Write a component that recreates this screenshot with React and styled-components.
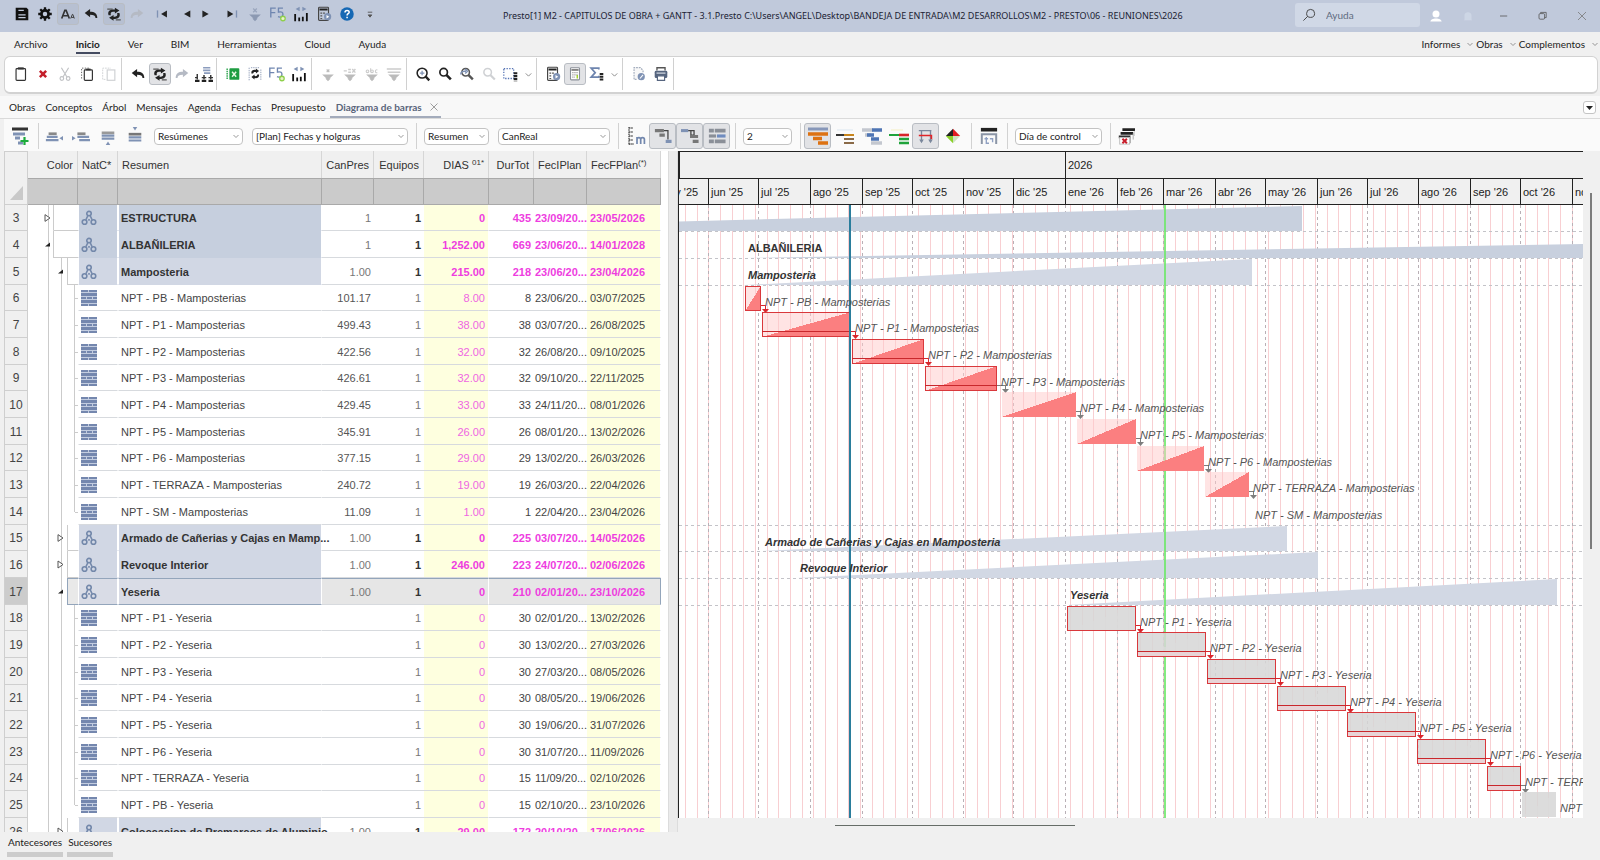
import React from "react";
import styled, { createGlobalStyle, css } from "styled-components";

const UI = `Lato, "Noto Sans", sans-serif`;
const GRID = `"Liberation Sans", Arial, sans-serif`;

const Global = createGlobalStyle`
  * { box-sizing: border-box; }
  html, body { margin: 0; height: 100%; }
  #root { height: 100%; }
  body { font-family: ${UI}; font-size: 10px; color: #222; background: #f0f0f0; overflow: hidden; }
  button, input, select { font: inherit; color: inherit; margin: 0; }
`;

/* ---------- icons ---------- */

const K = "#222";
const B = "#7f92b4";
const F = "#cfd1d4";
const FUNNEL = "M3.500 10.500h13l-4.800 4.500h1.300l-3 3-3-3h1.300z";

const ICONS = {
  save: <><path d="M3 3h12l2 2v12H3z" fill="#111" /><path d="M6 6h6M6 11h8M6 14h8" stroke="#c0c9db" strokeWidth="1.4" /></>,
  gear: <><circle cx="10" cy="10" r="4" fill="none" stroke="#111" strokeWidth="3" /><path d="M10 2.500v3M10 14.500v3M2.500 10h3M14.500 10h3M4.700 4.700l2 2M13.300 13.300l2 2M15.300 4.700l-2 2M6.700 13.300l-2 2" stroke="#111" strokeWidth="2.600" /></>,
  fontSize: <><path d="M3 15L6.500 6h1.400L11.500 15M4.500 12h5.400" fill="none" stroke="#333" strokeWidth="1.800" /><path d="M13 15l1.800-4.500h.6L17 15M13.700 13.800h2.800" fill="none" stroke="#333" strokeWidth="1" /></>,
  undo: <path d="M3 9l6-4.500v3c5 0 8 2 8 7h-2c0-3-2-3.800-6-3.800v3z" fill={K} />,
  redoOff: <path d="M17 9l-6-4.500v3c-5 0-8 2-8 7h2c0-3 2-3.800 6-3.800v3z" fill="#b5bac4" />,
  cycle: <><path d="M4 11.500c-1.500-4 1-6.500 5-6.500h2V3l5 3.200-5 3.300V7.500H9c-2.500 0-3 1.500-2.500 4z" fill={K} /><path d="M16 9c1.500 4-1 6.500-5 6.500H9.500v2l-5-3.200 5-3.300v2H11c2.500 0 3-1.500 2.500-4z" fill={K} /><path d="M2.500 4.500h6M12 16.500h5.500" stroke="#555" strokeWidth="1.500" /></>,
  first: <><path d="M5 6v8" stroke={B} strokeWidth="1.500" /><path d="M15.500 6v8L9 10z" fill={K} /></>,
  prev: <path d="M17 6v8l-7-4z" fill={K} />,
  next: <path d="M6 6v8l7-4z" fill={K} />,
  last: <><path d="M15 6v8" stroke={B} strokeWidth="1.500" /><path d="M5 6v8l6.500-4z" fill={K} /></>,
  filterBlue: <><path d={FUNNEL} fill="#8c99b2" /><path d="M8 4l4 4M12 4L8 8" stroke="#9aa6bd" strokeWidth="1.500" /></>,
  f5: <><path d="M2 14V3.500h5.500M2 8.500h5M15.500 3.500h-5v4.500c4-1 5 .5 5 2.500 0 2.500-3 3.500-5.500 2.500" fill="none" stroke="#6f86b0" strokeWidth="1.500" /><circle cx="15.500" cy="15" r="2.500" fill="#e9f3c8" stroke="#8ed04b" strokeWidth="1.400" /></>,
  bars: <><path d="M8.500 2v5L4 4.500zM11.500 2v5L16 4.500z" fill={B} /><path d="M3.500 18v-8M8 18v-4M12 18v-5M16.500 18V9" stroke="#111" strokeWidth="2" /></>,
  calcPlay: <><rect x="4" y="2.500" width="11" height="14.500" rx="1" fill="none" stroke="#444" strokeWidth="1.300" /><path d="M5 5h9" stroke={K} strokeWidth="2.200" /><path d="M6 9h2M9 9h2M6 12h2M6 15h2" stroke="#555" strokeWidth="1.300" /><circle cx="14" cy="13" r="4" fill={B} /><path d="M12.800 11v4l3-2z" fill="#fff" /></>,
  help: <><circle cx="10" cy="10" r="7.500" fill="#1668b4" /><path d="M7.800 8.300c0-3 4.600-2.800 4.600-.3 0 1.700-2.300 1.700-2.300 3.600M10.100 13v1.800" fill="none" stroke="#fff" strokeWidth="1.700" /></>,
  more: <path d="M7.500 8h5M8 11h4l-2 2.500z" stroke="#555" fill="#555" strokeWidth="1" />,
  clip: <><rect x="4.500" y="4" width="10.500" height="13" rx="1" fill="none" stroke="#333" strokeWidth="1.300" /><path d="M6.500 3.800h6.500" stroke="#333" strokeWidth="2.400" /></>,
  del: <path d="M6.500 6.500l7 7M13.500 6.500l-7 7" stroke="#c4202c" strokeWidth="2.800" />,
  cut: <g fill="none" stroke="#c0c2c5" strokeWidth="1.300"><path d="M6 3l6 10M14 3L8 13" /><circle cx="6.500" cy="15" r="2" /><circle cx="13.500" cy="15" r="2" /></g>,
  copy: <><rect x="7" y="5.500" width="9" height="11.500" rx="1" fill="none" stroke="#333" strokeWidth="1.300" /><path d="M9 5h5" stroke="#333" strokeWidth="2" /><path d="M4 15V3.500h8" fill="none" stroke="#555" strokeDasharray="1.500 1.500" /></>,
  pasteOff: <><rect x="8" y="5.500" width="8.500" height="11.500" fill="none" stroke={F} strokeWidth="1.300" /><path d="M6 16H3V3.500h9" fill="none" stroke={F} strokeDasharray="2 1" /></>,
  org: <><path d="M9 3h8M9 6h8M10 9h7" stroke="#8b9cbd" strokeWidth="1.800" /><path d="M0 17.500h5M7.500 17.500h5M15 17.500h5" stroke={K} strokeWidth="2.500" /><path d="M2.500 10v6M10 11v5M17.500 11v5M7.500 14h5M15 14h5M0 14h2" stroke="#333" strokeWidth="1.600" /></>,
  excel: <><rect x="6" y="3.500" width="11" height="13" rx="1" fill="#1f9d42" /><path d="M3.500 4v12" stroke="#1f9d42" strokeWidth="1.500" strokeDasharray="1.500 1" /><path d="M9 7.500l4.500 5.500M13.500 7.500L9 13" stroke="#e9f8e4" strokeWidth="1.600" /></>,
  refresh: <><path d="M3.500 3v14M5.500 3h9M16.500 5v12" stroke="#8c9bb5" strokeDasharray="1.500 1" fill="none" /><path d="M6 9.500C5.500 6 8 5 11 5.500V4l3.500 2.700L11 9.500V7.800C9 7.500 8 8 8 9.500zM14.500 10.500c.5 3.500-2 4.500-5 4v1.500L6 13.300 9.500 10.500v1.800c2 .3 3-.3 3-1.800z" fill={K} /></>,
  f1: <><path d={FUNNEL} fill="#bbb" /><path d="M8.500 5l3 3M11.500 5l-3 3" stroke="#bbb" strokeWidth="1.300" /></>,
  f2: <><path d={FUNNEL} fill="#bbb" /><path d="M3 6.500h3.500M8 5h3M8 8h3M12.500 4.500L16 8.500M16 4.500l-3.500 4" stroke="#ccc" strokeWidth="1.600" /></>,
  f3: <><path d={FUNNEL} fill="#bbb" /><g fill="none" stroke="#ccc" strokeWidth="1.200"><circle cx="5" cy="7" r="1.500" /><circle cx="10" cy="7" r="1.500" /><path d="M8.500 3.500v4M16 5.500c-3-1-3 4 0 3" /></g></>,
  f4: <><path d={FUNNEL} fill="#bbb" /><path d="M2 4.500h16M3 8h14" stroke="#ccc" strokeWidth="1.800" /></>,
  zoomIn: <g fill="none" stroke={K}><circle cx="9" cy="9" r="5.500" strokeWidth="1.700" /><path d="M13 13l4 4" strokeWidth="2.600" /><path d="M9 6.500v5M6.500 9h5" stroke={B} strokeWidth="1.400" /></g>,
  zoom: <g fill="none" stroke={K}><circle cx="8.500" cy="8" r="4.200" strokeWidth="1.900" /><path d="M11.500 11l5 5" strokeWidth="2.800" /></g>,
  zoomPrev: <g fill="none" stroke="#555"><circle cx="8.500" cy="8" r="4.200" strokeWidth="1.700" /><path d="M11.500 11l5 5" strokeWidth="2.600" /><path d="M3 10.500c0-3 3-4 6-3.500M8 4.500L10.500 7 8 9.500" stroke={B} strokeWidth="1.600" /></g>,
  zoomOff: <g fill="none" stroke={F}><circle cx="8.500" cy="8" r="4.200" strokeWidth="1.700" /><path d="M11.500 11l5 5" strokeWidth="2.400" /></g>,
  select: <><rect x="2" y="4" width="11" height="11" fill="none" stroke="#5674b5" strokeWidth="1.400" strokeDasharray="1.500 1.500" /><path d="M15 8v10" stroke={K} strokeWidth="4" strokeDasharray="2.400 .8" /></>,
  calc: <><rect x="5" y="3" width="10" height="13.500" rx="1" fill="#fff" stroke="#8a8f98" strokeWidth="1.200" /><path d="M6 5.500h8" stroke="#555" strokeWidth="1.500" /><path d="M7 8.500h6M7 11h6M7 13.500h3" stroke="#999" strokeWidth="1.400" strokeDasharray="1.300 1" /><path d="M12.500 11v4" stroke="#9bd11c" strokeWidth="1.500" /></>,
  sigma: <><path d="M12 5V3.500H3.500l4.500 5-4.500 5H12V12" fill="none" stroke="#6d84ae" strokeWidth="1.900" /><path d="M15 9v8.500" stroke={K} strokeWidth="4" strokeDasharray="2.200 .8" /></>,
  docLink: <><path d="M14.500 8V6l-3-3H4.500v13H8" fill="#f8f8f8" stroke="#a3adbd" strokeWidth="1.300" strokeDasharray="2 1" /><circle cx="12.500" cy="13" r="4" fill={B} /><path d="M11 15l3.500-4" stroke="#fff" strokeWidth="1.200" /></>,
  print: <><path d="M5.500 6V3h9v3" fill="none" stroke="#555" strokeWidth="1.500" /><rect x="3" y="6.500" width="14" height="8" rx="1.500" fill="#56657f" /><path d="M5 9h10" stroke="#d9dfe9" strokeWidth="1.300" /><path d="M6 12h8v5H6z" fill="#fff" stroke="#56657f" strokeWidth="1.300" /></>,
  addRow: <><path d="M2 3h16" stroke="#333" strokeWidth="3" /><path d="M3 8h12M5 12h5M8 17h5" stroke={B} strokeWidth="2.800" /><path d="M14.500 11v8M10.500 15h8" stroke="#1cab3c" strokeWidth="2.200" /></>,
  rowL: <><path d="M4 7.500h9" stroke="#888" strokeWidth="3" /><path d="M2 11h12M1 14.500h14" stroke={B} strokeWidth="2.500" /><path d="M20 10v5l-4-2.500z" fill={B} /></>,
  rowR: <><path d="M6 7.500h9" stroke="#888" strokeWidth="3" /><path d="M6 11h13M8 14.500h12" stroke={B} strokeWidth="2.500" /><path d="M0 10v5l4-2.500z" fill={B} /></>,
  rowD: <><path d="M3 6.500h14" stroke="#999" strokeWidth="3" /><path d="M3 9.500h14M3 13h14" stroke={B} strokeWidth="2.400" /><path d="M7.500 20h5L10 16z" fill={B} /></>,
  rowU: <><path d="M7.500 0h5L10 4z" fill={B} /><path d="M3 8h14" stroke="#777" strokeWidth="3" /><path d="M3 11.500h14M3 15h14" stroke={B} strokeWidth="2.400" /></>,
  scaleM: <><path d="M3 1v18M3 18h5M3 2h4M3 6h4M3 10h4M3 14h4" stroke="#555" strokeWidth="1.400" fill="none" strokeDasharray="1.500 .7" /><path d="M11 18v-7M11 13.500c0-2.500 3.700-2.500 3.700 0V18M14.700 13.500c0-2.500 3.700-2.500 3.700 0V18" fill="none" stroke="#7388ae" strokeWidth="1.700" /></>,
  link1: <><path d="M1 4h10M6 9h6" stroke="#777" strokeWidth="3.400" /><path d="M11 4h4.500v10" fill="none" stroke="#444" strokeWidth="1.400" /><path d="M13 16h6.500" stroke={B} strokeWidth="3.600" /></>,
  link2: <><path d="M0 4h8" stroke={B} strokeWidth="3.400" /><path d="M8 4h6.500v6M11 4v5h3" fill="none" stroke="#444" strokeWidth="1.400" /><path d="M10 10.500h9M13 16h6.500" stroke="#777" strokeWidth="3.400" /></>,
  grid3: <><path d="M1 4h5.500M7.500 4h12M1 16h5.500M7.500 16h12" stroke="#8a8f98" strokeWidth="4" /><path d="M1 10h8" stroke="#8a8f98" strokeWidth="3.500" /><path d="M10 10h9.500" stroke="#6f8cc0" strokeWidth="3.500" /></>,
  orange: <><path d="M0 3h20" stroke="#8797b9" strokeWidth="3" /><path d="M0 8h20M5 12.500h9M10 17h10" stroke="#dd7212" strokeWidth="3.400" /></>,
  brown: <><path d="M2 4h16" stroke="#dbe6f0" /><path d="M1 9h8" stroke="#333" strokeWidth="2" /><path d="M9 9h10" stroke="#c8851c" strokeWidth="2" /><path d="M9 13h10M9 17h10" stroke="#8a6a48" strokeWidth="2.200" /></>,
  blueBars: <><path d="M0 4h11M3 9h6M9 17h11" stroke="#c3c7cf" strokeWidth="3.500" /><path d="M10 4h10M5 9h7M9 13h8" stroke="#4f75b4" strokeWidth="3.500" /></>,
  greenBars: <><path d="M2 4h12" stroke="#f4efc0" /><path d="M0 9h11" stroke="#1fa33b" strokeWidth="2" /><path d="M10 9h10" stroke="#d8232a" strokeWidth="2.600" /><path d="M10 13h10M10 17h10" stroke="#1fa33b" strokeWidth="2.400" /></>,
  flow: <><path d="M5 4v12M15 4v12M2 4h14" stroke="#7a879c" strokeWidth="1.500" fill="none" /><path d="M2 9.500h14v4" fill="none" stroke="#e02428" strokeWidth="1.800" /><path d="M2.500 14h5L5 18zM12.500 14h5L15 18z" fill="#7a879c" /></>,
  diamond: <><path d="M10 2v8H2z" fill="#222" /><path d="M10 2l8 8h-8z" fill="#e11b22" /><path d="M2 10h8v8z" fill="#8bd02b" /><path d="M18 10l-8 8v-8z" fill="#cfe3c2" /></>,
  window: <><rect x="1" y="1" width="18" height="4" fill="#222" /><path d="M2 7v12M2 8h16v11" fill="none" stroke="#8b95a6" strokeWidth="2.200" /><path d="M5 13h4M7 11v7h3M11 13h3v4" fill="none" stroke="#8fa0c2" strokeWidth="1.500" /></>,
  closeAll: <><path d="M6 1.500h14v3H6zM4 5.500h14v3H4zM2 9.500h13v3H2z" fill="#222" /><path d="M15 10v8M18 7v7M20 4v6" fill="none" stroke="#aaa" /><rect x="3" y="11.500" width="11" height="7.500" fill="#fff" stroke="#bbb" /><path d="M6 13l5 5M11 13l-5 5" stroke="#c81e2b" strokeWidth="2.200" /></>,
  user: <><circle cx="10" cy="7" r="5" fill="#fff" /><path d="M2 18c0-6 16-6 16 0z" fill="#fff" /></>,
  bell: <path d="M5 15V9c0-6 10-6 10 0v6l1 1H4z" fill="#cdd6e5" />,
  min: <path d="M5 10h9" stroke="#555" />,
  max: <><rect x="5" y="7" width="7" height="7" rx="1.500" fill="none" stroke="#555" /><path d="M7 7V5.500h7V12h-2" fill="none" stroke="#555" /></>,
  close: <path d="M5 5l10 10M15 5L5 15" stroke="#777" />,
  search: <g fill="none" stroke="#444" strokeWidth="1.200"><circle cx="12" cy="8" r="5" /><path d="M8.500 11.500L3 17" /></g>,
  chev: <path d="M5 8l5 5 5-5" fill="none" stroke="#777" strokeWidth="1.500" />,
};

const Svg = styled.svg`
  width: ${(p) => p.$s || 18}px;
  height: ${(p) => p.$s || 18}px;
  flex: none;
  display: block;
`;
const Icon = ({ name, size }) => (
  <Svg viewBox="0 0 20 20" $s={size} aria-hidden="true">{ICONS[name]}</Svg>
);

/* ---------- shared controls ---------- */

const IconButton = styled.button`
  width: ${(p) => p.$w || 22}px;
  height: ${(p) => p.$h || 22}px;
  padding: 0;
  flex: none;
  display: flex;
  align-items: center;
  justify-content: center;
  border: 1px solid ${(p) => (p.$on ? "#b9bdc3" : "transparent")};
  border-radius: 3px;
  background: ${(p) => (p.$on ? p.$fill || "#e2e3e6" : "transparent")};
`;

const Tool = ({ name, on, w, h, fill, size }) => (
  <IconButton type="button" aria-label={name} $on={on} $w={w} $h={h} $fill={fill}>
    <Icon name={name} size={size} />
  </IconButton>
);

const Shell = styled.div`
  height: 100vh;
  display: flex;
  flex-direction: column;
`;

const TitleBar = styled.header`
  height: 32px;
  flex: none;
  display: flex;
  align-items: center;
  background: #c0c9db;
  padding: 0 7px 5px 11px;
`;
const QuickGroup = styled.div`
  display: flex;
  gap: ${(p) => p.$gap || 0}px;
  margin-right: ${(p) => p.$mr || 0}px;
`;
const Title = styled.h1`
  flex: 1;
  margin: 0 0 0 122px;
  padding-top: 4px;
  font-family: "Noto Sans", "Open Sans", sans-serif;
  font-size: 9px;
  font-weight: 400;
  line-height: 14px;
  color: #1b2233;
  white-space: nowrap;
`;
const SearchBox = styled.label`
  width: 125px;
  height: 24px;
  margin: 3px 5px 0 0;
  padding-left: 6px;
  display: flex;
  align-items: center;
  gap: 9px;
  border-radius: 3px;
  background: #d0d8e6;
  input {
    width: 80px;
    border: 0;
    padding: 0;
    background: none;
    outline: none;
  }
  input::placeholder { color: #5f6b7f; }
`;
const WindowButtons = styled.div`
  display: flex;
  gap: ${(p) => p.$gap}px;
  padding: 4px ${(p) => p.$pad || 0}px 0 0;
`;

const MenuBar = styled.nav`
  height: 24px;
  flex: none;
  display: flex;
  justify-content: space-between;
  padding: 4px 0 0 14px;
  background: #f0f0f0;
`;
const MenuGroup = styled.div`
  display: flex;
  gap: ${(p) => p.$gap}px;
`;
const MenuItem = styled.button`
  height: 18px;
  padding: 0;
  display: flex;
  align-items: center;
  gap: 5px;
  border: 0;
  border-bottom: 2px solid ${(p) => (p.$active ? "#444b60" : "transparent")};
  background: none;
  font-weight: ${(p) => (p.$active ? 700 : 400)};
  white-space: nowrap;
`;

const Ribbon = styled.div`
  height: 38px;
  flex: none;
  margin: 0 2px 0 4px;
  display: flex;
  background: #fff;
  border: 1px solid #d2d2d2;
  border-bottom-width: 2px;
  border-radius: 6px;
`;
const RibbonGroup = styled.div`
  display: flex;
  align-items: center;
  margin: 1px 0 2px;
  padding: 0 1px 0 5px;
  border-right: 1px solid #d0d0d0;
`;

const TabBar = styled.nav`
  height: 23px;
  flex: none;
  margin-top: 2px;
  padding: 0 4px 0 9px;
  display: flex;
  align-items: stretch;
  gap: 10px;
  background: #f8f8f8;
  border-bottom: 1px solid #dadada;
`;
const Tab = styled.a`
  display: flex;
  align-items: center;
  padding: 2px 0;
  color: #222;
  text-decoration: none;
  white-space: nowrap;
  ${(p) => p.$active && css`
    gap: 5px;
    margin-left: -6px;
    padding: 2px 0 0 6px;
    color: #59647a;
    font-weight: 700;
    border-bottom: 2px solid #a3abbb;
  `}
`;
const TabMenu = styled.button`
  width: 13px;
  height: 13px;
  margin: 5px 0 0 auto;
  padding: 0;
  display: flex;
  align-items: center;
  justify-content: center;
  border: 1px solid #c4c4c4;
  border-radius: 3px;
  background: #fff;
`;

const ChartBar = styled.div`
  height: 32px;
  flex: none;
  padding: 4px 0 2px 2px;
  margin-left: 4px;
  display: flex;
  align-items: center;
  background: #fafafa;
`;
const ChartTools = styled.div`
  height: 26px;
  display: flex;
  align-items: center;
  padding: 0 ${(p) => (p.$open ? 0 : 5)}px 0 ${(p) => (p.$first ? 0 : p.$open ? 1 : 3)}px;
  border-right: ${(p) => (p.$open ? 0 : 1)}px solid #d2d2d2;
`;
const Fields = styled.div`
  height: 26px;
  display: flex;
  align-items: center;
  gap: 9px;
  padding: 0 8px 0 ${(p) => (p.$tight ? 6 : 7)}px;
  border-right: 1px solid #d2d2d2;
`;
const SelectWrap = styled.span`
  display: grid;
  align-items: center;
  width: ${(p) => p.$w}px;
  > * { grid-area: 1 / 1; }
  svg { justify-self: end; margin-right: 2px; pointer-events: none; }
`;
const SelectBox = styled.select`
  appearance: none;
  width: 100%;
  height: 17px;
  padding: 0 14px 0 3px;
  border: 1px solid #c3c3c3;
  border-radius: 4px;
  background: #fff;
`;
const Select = ({ label, value, width }) => (
  <SelectWrap $w={width}>
    <SelectBox aria-label={label} defaultValue={value}><option>{value}</option></SelectBox>
    <Icon name="chev" size={10} />
  </SelectWrap>
);

/* ---------- data ---------- */

const ROWS = [
  { n: 3, level: 0, name: "ESTRUCTURA", can: "1", dias: "0", dur: 435, ini: "23/09/20...", fin: "23/05/2026", from: [2024, 9, 23], to: [2026, 5, 23] },
  { n: 4, level: 0, open: true, name: "ALBAÑILERIA", can: "1", dias: "1,252.00", dur: 669, ini: "23/06/20...", fin: "14/01/2028", from: [2025, 6, 23], to: [2028, 1, 14] },
  { n: 5, level: 1, open: true, name: "Mamposteria", can: "1.00", dias: "215.00", dur: 218, ini: "23/06/20...", fin: "23/04/2026", from: [2025, 6, 23], to: [2026, 4, 23] },
  { n: 6, level: 2, name: "NPT - PB - Mamposterias", can: "101.17", dias: "8.00", dur: 8, ini: "23/06/20...", fin: "03/07/2025", from: [2025, 6, 23], to: [2025, 7, 3], kind: "red", frame: true, link: "red" },
  { n: 7, level: 2, name: "NPT - P1 - Mamposterias", can: "499.43", dias: "38.00", dur: 38, ini: "03/07/20...", fin: "26/08/2025", from: [2025, 7, 3], to: [2025, 8, 26], kind: "red", frame: true, through: true, link: "red" },
  { n: 8, level: 2, name: "NPT - P2 - Mamposterias", can: "422.56", dias: "32.00", dur: 32, ini: "26/08/20...", fin: "09/10/2025", from: [2025, 8, 26], to: [2025, 10, 9], kind: "red", frame: true, through: true, link: "red" },
  { n: 9, level: 2, name: "NPT - P3 - Mamposterias", can: "426.61", dias: "32.00", dur: 32, ini: "09/10/20...", fin: "22/11/2025", from: [2025, 10, 9], to: [2025, 11, 22], kind: "red", frame: true, through: true, link: "gray" },
  { n: 10, level: 2, name: "NPT - P4 - Mamposterias", can: "429.45", dias: "33.00", dur: 33, ini: "24/11/20...", fin: "08/01/2026", from: [2025, 11, 24], to: [2026, 1, 8], kind: "red", link: "gray" },
  { n: 11, level: 2, name: "NPT - P5 - Mamposterias", can: "345.91", dias: "26.00", dur: 26, ini: "08/01/20...", fin: "13/02/2026", from: [2026, 1, 8], to: [2026, 2, 13], kind: "red", link: "gray" },
  { n: 12, level: 2, name: "NPT - P6 - Mamposterias", can: "377.15", dias: "29.00", dur: 29, ini: "13/02/20...", fin: "26/03/2026", from: [2026, 2, 13], to: [2026, 3, 26], kind: "red", link: "gray" },
  { n: 13, level: 2, name: "NPT - TERRAZA - Mamposterias", can: "240.72", dias: "19.00", dur: 19, ini: "26/03/20...", fin: "22/04/2026", from: [2026, 3, 26], to: [2026, 4, 22], kind: "red", link: "gray" },
  { n: 14, level: 2, last: true, name: "NPT - SM - Mamposterias", can: "11.09", dias: "1.00", dur: 1, ini: "22/04/20...", fin: "23/04/2026", from: [2026, 4, 22], to: [2026, 4, 23] },
  { n: 15, level: 1, name: "Armado de Cañerias y Cajas en Mamp...", label: "Armado de Cañerias y Cajas en Mamposteria", can: "1.00", dias: "0", dur: 225, ini: "03/07/20...", fin: "14/05/2026", from: [2025, 7, 3], to: [2026, 5, 14] },
  { n: 16, level: 1, name: "Revoque Interior", can: "1.00", dias: "246.00", dur: 223, ini: "24/07/20...", fin: "02/06/2026", from: [2025, 7, 24], to: [2026, 6, 2] },
  { n: 17, level: 1, open: true, selected: true, name: "Yeseria", can: "1.00", dias: "0", dur: 210, ini: "02/01/20...", fin: "23/10/2026", from: [2026, 1, 2], to: [2026, 10, 23] },
  { n: 18, level: 2, name: "NPT - P1 - Yeseria", can: "", dias: "0", dur: 30, ini: "02/01/20...", fin: "13/02/2026", from: [2026, 1, 2], to: [2026, 2, 13], kind: "idle", frame: true, link: "red" },
  { n: 19, level: 2, name: "NPT - P2 - Yeseria", can: "", dias: "0", dur: 30, ini: "13/02/20...", fin: "27/03/2026", from: [2026, 2, 13], to: [2026, 3, 27], kind: "idle", frame: true, through: true, link: "red" },
  { n: 20, level: 2, name: "NPT - P3 - Yeseria", can: "", dias: "0", dur: 30, ini: "27/03/20...", fin: "08/05/2026", from: [2026, 3, 27], to: [2026, 5, 8], kind: "idle", frame: true, through: true, link: "red" },
  { n: 21, level: 2, name: "NPT - P4 - Yeseria", can: "", dias: "0", dur: 30, ini: "08/05/20...", fin: "19/06/2026", from: [2026, 5, 8], to: [2026, 6, 19], kind: "idle", frame: true, through: true, link: "red" },
  { n: 22, level: 2, name: "NPT - P5 - Yeseria", can: "", dias: "0", dur: 30, ini: "19/06/20...", fin: "31/07/2026", from: [2026, 6, 19], to: [2026, 7, 31], kind: "idle", frame: true, through: true, link: "red" },
  { n: 23, level: 2, name: "NPT - P6 - Yeseria", can: "", dias: "0", dur: 30, ini: "31/07/20...", fin: "11/09/2026", from: [2026, 7, 31], to: [2026, 9, 11], kind: "idle", frame: true, through: true, link: "red" },
  { n: 24, level: 2, name: "NPT - TERRAZA - Yeseria", can: "", dias: "0", dur: 15, ini: "11/09/20...", fin: "02/10/2026", from: [2026, 9, 11], to: [2026, 10, 2], kind: "idle", frame: true, through: true, link: "gray" },
  { n: 25, level: 2, last: true, name: "NPT - PB - Yeseria", can: "", dias: "0", dur: 15, ini: "02/10/20...", fin: "23/10/2026", from: [2026, 10, 2], to: [2026, 10, 23], kind: "idle" },
  { n: 26, level: 1, name: "Coloccacion de Premarcos de Aluminio", can: "1.00", dias: "29.00", dur: 172, ini: "20/10/20...", fin: "17/06/2026", off: true },
];

/* ---------- table ---------- */

const Work = styled.main`
  flex: 1;
  min-height: 0;
  display: flex;
  font-family: ${GRID};
  font-size: 11px;
`;
const TablePane = styled.section`
  width: 664px;
  flex: none;
  margin-left: 4px;
  overflow: hidden;
  background: #fff;
`;
const Splitter = styled.div`
  width: 10px;
  flex: none;
  background: #ebebeb;
  border: solid #dcdcdc;
  border-width: 0 1px;
`;
const Table = styled.table`
  table-layout: fixed;
  width: 657px;
  border-collapse: separate;
  border-spacing: 0;
  line-height: 16px;
  white-space: nowrap;
`;
const Col = styled.col`
  width: ${(p) => p.$w}px;
`;
const Head = styled.th`
  height: 27px;
  padding: 0 ${(p) => (p.$end ? 4 : 0)}px 0 4px;
  text-align: ${(p) => (p.$end ? "right" : "left")};
  font-weight: 400;
  color: #333;
  background: #f0f0f0;
  border-right: 1px solid #d6d6d6;
  sup { font-size: 8px; line-height: 0; vertical-align: 4px; }
`;
const Filter = styled.td`
  height: 27px;
  padding: 0;
  background: #cbcbcb;
  border: solid #a9a9a9;
  border-width: 1px 1px 1px 0;
`;
const Corner = styled.th`
  padding: 0;
  vertical-align: bottom;
  background: #f0f0f0;
  border: 1px solid #cfcfcf;
  svg { width: 22px; height: 20px; display: block; }
`;

const FILL = ["#c6cfde", "#d1d7e4", "#fff"];
const SEP = "#d7dade";
const EDGE = "#93a5bb";

const Row = styled.tr`
  color: ${(p) => (p.$sum ? "#333" : "#444")};
  > * {
    height: 27px;
    ${(p) => p.$selected && css`
      background: #e6e6e6;
      border-top: 1px solid ${EDGE};
      border-bottom: 1px solid ${EDGE};
    `}
  }
  > :last-child {
    ${(p) => p.$selected && css`border-right: 1px solid ${EDGE};`}
  }
  &:nth-child(3n + 1) > * { height: 26px; }
`;
const RowHead = styled.th`
  padding: 1px 0 0;
  font-weight: 400;
  font-size: 12px;
  color: #444;
  border: solid #cfcfcf;
  border-width: 0 1px 1px 1px;
  background: ${(p) => (p.$selected ? "#cccccc" : "#f0f0f0")} !important;
`;
const TreeCell = styled.td`
  padding: 0;
  background: #fff !important;
  border: 0 !important;
  svg { display: block; width: 50px; height: 100%; }
`;
const Cell = styled.td`
  padding: 1px ${(p) => p.$pr ?? 3}px 0 ${(p) => p.$pl || 0}px;
  text-align: ${(p) => (p.$left ? "left" : "right")};
  border-bottom: 1px solid ${SEP};
  font-weight: ${(p) => (p.$bold ? 700 : 400)};
  color: ${(p) => p.$c || "inherit"};
`;
const FillCell = styled(Cell)`
  border-left: 1px solid #fff;
  border-right: 1px solid #fff;
  background: ${(p) => (p.$sel ? "#d9dce6" : FILL[p.$level])} !important;
  border-bottom-color: ${(p) => (p.$sel ? EDGE : p.$level === 2 ? SEP : FILL[p.$level])};
`;
const YellowCell = styled(Cell)`
  background: ${(p) => (p.$sel ? "#e6e6e6" : "#feffdf")} !important;
  border-right: 1px solid #fff;
`;

const NodeIcon = () => (
  <Svg viewBox="0 0 18 18" $s={16}>
    <g fill="none" stroke="#7388aa" strokeWidth="1.800">
      <circle cx="9" cy="4" r="2.500" /><circle cx="4" cy="13.500" r="2.600" /><circle cx="14" cy="13.500" r="2.600" />
      <path d="M7.800 6.200L5.500 11M10.200 6.200L12.500 11M9 10v2" />
    </g>
  </Svg>
);
const BrickIcon = () => (
  <Svg viewBox="0 0 16 16" $s={16} shapeRendering="crispEdges">
    <path d="M0 0h16v16H0z" fill="#c3cde0" />
    <path d="M0 0h7v2H0zM8 0h8v2H8zM0 3h16v3H0zM0 7h5v2H0zM6 7h5v2H6zM12 7h4v2h-4zM0 10h16v3H0zM0 14h7v2H0zM8 14h8v2H8z" fill="#7487ae" />
  </Svg>
);

const Tree = ({ row }) => {
  const line = { stroke: "#cbcbcb", strokeWidth: 1 };
  const x = row.level === 0 ? 19 : 32;
  return (
    <svg viewBox="0 0 50 27" preserveAspectRatio="none" shapeRendering="crispEdges" aria-hidden="true">
      <path d="M20.500 0V27" {...line} />
      {row.level > 0 && <path d="M33.500 0V27" {...line} />}
      {row.level === 0 && <path d="M25.500 0V26.500H50" fill="none" {...line} />}
      {row.level === 1 && !row.selected && <path d="M39.500 0V26.500H50" fill="none" {...line} />}
      {row.selected && <><path d="M39.500 0H50V27H39.500z" fill="#e9e9e9" /><path d="M50 .5H39.500V26.500H50" fill="none" stroke={EDGE} /></>}
      {row.level === 2 && <path d={`M46.500 0V${row.last ? 14 : 27}M46.500 14H50`} {...line} fill="none" />}
      {row.level < 2 && (
        <g shapeRendering="auto">
          {row.open
            ? <path d={`M${x + 3} 11.500V15.500H${x - 2}z`} fill="#222" />
            : <path d={`M${x - 2} 10V17L${x + 3} 13.500z`} fill="#fff" stroke="#555" />}
        </g>
      )}
    </svg>
  );
};

const PINK = "#ee3ddf";
const COLS = [24, 50, 40, 204, 52, 50, 65, 45, 53, 74];

const ConceptTable = () => (
  <Table>
    <colgroup>{COLS.map((w, i) => <Col key={i} $w={w} />)}</colgroup>
    <thead>
      <tr>
        <Corner rowSpan={2} aria-label="Seleccionar todo">
          <svg viewBox="0 0 22 20" aria-hidden="true"><path d="M18 2v14H5z" fill="#c9c9c9" /></svg>
        </Corner>
        <Head $end>Color</Head>
        <Head>NatC*</Head>
        <Head>Resumen</Head>
        <Head $end>CanPres</Head>
        <Head $end>Equipos</Head>
        <Head $end>DIAS <sup>01*</sup></Head>
        <Head $end>DurTot</Head>
        <Head>FecIPlan</Head>
        <Head>FecFPlan<sup>(*)</sup></Head>
      </tr>
      <tr>{COLS.slice(1).map((_, i) => <Filter key={i} />)}</tr>
    </thead>
    <tbody>
      {ROWS.map((r) => {
        const sum = r.level < 2;
        return (
          <Row key={r.n} $sum={sum} $selected={r.selected}>
            <RowHead scope="row" $selected={r.selected}>{r.n}</RowHead>
            <TreeCell><Tree row={r} /></TreeCell>
            <FillCell $left $pl={2} $level={r.level} $sel={r.selected}>{sum ? <NodeIcon /> : <BrickIcon />}</FillCell>
            <FillCell $left $pl={2} $pr={0} $level={r.level} $sel={r.selected} $bold={sum}>{r.name}</FillCell>
            <Cell $c={sum ? "#777" : "#555"}>{r.can}</Cell>
            <Cell $bold={sum} $c={sum ? "#333" : "#777"}>1</Cell>
            <YellowCell $bold={sum} $c={sum ? PINK : "#ef66e2"} $sel={r.selected}>{r.dias}</YellowCell>
            <Cell $bold={sum} $c={sum ? PINK : "#444"}>{r.dur}</Cell>
            <Cell $left $pl={1} $pr={0} $bold={sum} $c={sum ? PINK : "#444"}>{r.ini}</Cell>
            <YellowCell $left $pl={3} $bold={sum} $c={sum ? PINK : "#444"} $sel={r.selected}>{r.fin}</YellowCell>
          </Row>
        );
      })}
    </tbody>
  </Table>
);

/* ---------- gantt ---------- */

const DAY = 864e5;
const ORIGIN = Date.UTC(2026, 0, 1);
const ORIGIN_X = 387;
const xOf = (t) => Math.round(ORIGIN_X + ((t - ORIGIN) / DAY) * (5 / 3));
const dateX = ([y, m, d]) => xOf(Date.UTC(y, m - 1, d)) - 1;
const rowY = (i) => Math.floor((i * 80) / 3);
const NAMES = ["ene", "feb", "mar", "abr", "may", "jun", "jul", "ago", "sep", "oct", "nov", "dic"];
const MONTHS = Array.from({ length: 32 }, (_, i) => {
  const start = Date.UTC(2025, 4 + i, 1);
  const d = new Date(start);
  const x = xOf(start);
  return {
    key: i,
    x,
    w: xOf(Date.UTC(2025, 5 + i, 1)) - x,
    text: `${NAMES[d.getUTCMonth()]} '${String(d.getUTCFullYear()).slice(2)}`,
  };
});
const SUNDAYS = Array.from({ length: 130 }, (_, i) => xOf(Date.UTC(2025, 4, 18 + i * 7)) - 1);

const GanttPane = styled.section`
  flex: 1;
  min-width: 0;
  display: flex;
  flex-direction: column;
`;
const ChartFrame = styled.div`
  flex: 1;
  min-height: 0;
  display: flex;
  flex-direction: column;
  border-left: 1px solid #222;
  background: #fff;
`;
const Scale = styled.div`
  height: 27px;
  flex: none;
  display: flex;
  overflow: hidden;
  background: #f0f0f0;
  border-top: 1px solid #222;
  line-height: 26px;
  color: #222;
  ${(p) => p.$last && css`border-bottom: 1px solid #222;`}
`;
const Period = styled.div`
  flex: none;
  padding-left: 2px;
  border-left: 1px solid #222;
  white-space: nowrap;
`;
const Chart = styled.svg`
  flex: 1;
  min-height: 0;
  width: 100%;
  display: block;
  font-family: ${GRID};
  font-size: 11px;
`;
const HScroll = styled.div`
  height: 14px;
  flex: none;
  padding: 7px 0 0 157px;
  background: #f0f0f0;
`;
const HThumb = styled.div`
  width: 240px;
  height: 1px;
  background: #666d68;
`;
const VScroll = styled.div`
  width: 17px;
  flex: none;
  padding: 42px 0 0 7px;
  background: #f0f0f0;
`;
const VThumb = styled.div`
  width: 2px;
  height: 356px;
  background: #7c7c7c;
`;

const Task = ({ row, next, i }) => {
  const x0 = dateX(row.from);
  const x1 = dateX(row.to) - 1;
  const y = rowY(i) + 1;
  const link = row.link === "red" ? "#d9262c" : "#7d7d7d";
  const lx = row.link ? dateX(next.from) + 3.5 : 0;
  return (
    <g>
      {row.kind === "red" && (
        <>
          <rect x={x0} y={y} width={x1 - x0} height="25" fill="#ffc9c9" fillOpacity="0.5" />
          <path d={`M${x0} ${y + 25}L${x1} ${y}V${y + 25}z`} fill="#fb7f80" />
        </>
      )}
      {row.kind === "idle" && (
        <>
          <rect x={x0} y={y} width={x1 - x0} height="25" fill="#d6d6d6" fillOpacity="0.85" />
          <path d={`M${x0} ${y + 25}L${x1} ${y}V${y + 25}z`} fill="#dcdcdc" fillOpacity="0.7" />
        </>
      )}
      {row.through && row.kind === "idle" && <rect x={x0} y={y + 20} width={x1 - x0} height="5" fill="#e8d3d6" />}
      {row.frame && <rect x={x0 + 0.5} y={y + 0.5} width={x1 - x0 - 1} height="24" fill="none" stroke="#d9383c" />}
      {row.through && <path d={`M${x0} ${y + 19.5}H${x1}`} stroke="#c9272c" />}
      {row.link && (
        <>
          <path d={`M${x1} ${y + 19.5}H${lx}V${y + 24}`} fill="none" stroke={link} />
          <path d={`M${lx - 3.5} ${y + 23}h7l-3.500 4z`} fill={link} shapeRendering="auto" />
        </>
      )}
    </g>
  );
};

const Gantt = () => {
  const rows = ROWS.filter((r) => !r.off);
  return (
    <Chart shapeRendering="crispEdges" role="img" aria-label="Diagrama de barras">
      {SUNDAYS.map((x) => <path key={x} d={`M${x + 0.5} 0V2000`} stroke="#f8cfd2" />)}
      {MONTHS.map((m) => <path key={m.key} d={`M${m.x - 0.5} 0V2000`} stroke="#b9b0b6" strokeDasharray="3 3" />)}
      {rows.map((r, i) => r.level < 2 && (
        <path
          key={r.n}
          d={`M${dateX(r.from)} ${rowY(i + 1)}L${dateX(r.to)} ${rowY(i) + 1}V${rowY(i + 1)}z`}
          fill={r.level === 0 ? "#c8d0de" : "#d2d8e4"}
          shapeRendering="auto"
        />
      ))}
      {[1, 2, 3, 12, 13, 14, 15].map((i) => (
        <path key={i} d={`M0 ${rowY(i) + 0.5}H2400`} stroke="#c3c3c8" strokeDasharray="3 3" />
      ))}
      <path d="M486 0V2000" stroke="#6fe86a" strokeWidth="2" strokeOpacity="0.85" />
      {rows.map((r, i) => r.level === 2 && <Task key={r.n} row={r} next={rows[i + 1]} i={i} />)}
      <path d="M171 0V2000" stroke="#2a7d9c" strokeWidth="2" />
      {rows.slice(1).map((r, k) => {
        const i = k + 1;
        const sum = r.level < 2;
        return (
          <text
            key={r.n}
            x={dateX(sum ? r.from : r.to) + 3}
            y={rowY(i) + 21}
            fill={sum ? "#333" : "#555"}
            fontWeight={sum ? 700 : 400}
            fontStyle={r.level === 0 ? "normal" : "italic"}
          >
            {r.label || r.name}
          </text>
        );
      })}
    </Chart>
  );
};

const Footer = styled.footer`
  height: 28px;
  flex: none;
  display: flex;
  gap: 4px;
  padding: 4px 0 0 7px;
`;
const FooterTab = styled.button`
  height: 21px;
  padding: 0 1px 4px;
  border: 0;
  border-bottom: 5px solid #cccccc;
  background: none;
  line-height: 12px;
`;

export default function App() {
  return (
    <Shell>
      <Global />
      <TitleBar>
        <QuickGroup $gap={1} $mr={3}>
          <Tool name="save" /><Tool name="gear" />
          <Tool name="fontSize" on fill="#b7c0d2" /><Tool name="undo" />
          <Tool name="cycle" on fill="#b7c0d2" /><Tool name="redoOff" />
        </QuickGroup>
        <QuickGroup $mr={4}>
          <Tool name="first" /><Tool name="prev" /><Tool name="next" />
        </QuickGroup>
        <QuickGroup $gap={1}>
          {["last", "filterBlue", "f5", "bars", "calcPlay", "help", "more"].map((n) => <Tool key={n} name={n} />)}
        </QuickGroup>
        <Title>Presto[1] M2 - CAPITULOS DE OBRA + GANTT - 3.1.Presto C:\Users\ANGEL\Desktop\BANDEJA DE ENTRADA\M2 DESARROLLOS\M2 - PRESTO\06 - REUNIONES\2026</Title>
        <SearchBox>
          <Icon name="search" size={16} />
          <input placeholder="Ayuda" aria-label="Ayuda" />
        </SearchBox>
        <WindowButtons $gap={10} $pad={14}>
          <Tool name="user" size={14} /><Tool name="bell" size={14} />
        </WindowButtons>
        <WindowButtons $gap={17}>
          <Tool name="min" size={16} /><Tool name="max" size={16} /><Tool name="close" size={16} />
        </WindowButtons>
      </TitleBar>
      <MenuBar>
        <MenuGroup $gap={28}>
          {["Archivo", "Inicio", "Ver", "BIM", "Herramientas", "Cloud", "Ayuda"].map((t) => (
            <MenuItem key={t} type="button" $active={t === "Inicio"}>{t}</MenuItem>
          ))}
        </MenuGroup>
        <MenuGroup $gap={1}>
          {["Informes", "Obras", "Complementos"].map((t) => (
            <MenuItem key={t} type="button">{t}<Icon name="chev" size={10} /></MenuItem>
          ))}
        </MenuGroup>
      </MenuBar>
      <Ribbon>
        <RibbonGroup>{["clip", "del", "cut", "copy", "pasteOff"].map((n) => <Tool key={n} name={n} />)}</RibbonGroup>
        <RibbonGroup><Tool name="undo" /><Tool name="cycle" on /><Tool name="redoOff" /><Tool name="org" /></RibbonGroup>
        <RibbonGroup>{["excel", "refresh", "f5", "bars"].map((n) => <Tool key={n} name={n} />)}</RibbonGroup>
        <RibbonGroup>{["f1", "f2", "f3", "f4"].map((n) => <Tool key={n} name={n} />)}</RibbonGroup>
        <RibbonGroup>
          {["zoomIn", "zoom", "zoomPrev", "zoomOff", "select"].map((n) => <Tool key={n} name={n} />)}
          <Tool name="chev" w={13} size={11} />
        </RibbonGroup>
        <RibbonGroup><Tool name="calcPlay" /><Tool name="calc" on /><Tool name="sigma" /><Tool name="chev" w={13} size={11} /></RibbonGroup>
        <RibbonGroup><Tool name="docLink" /><Tool name="print" /></RibbonGroup>
      </Ribbon>
      <TabBar>
        {["Obras", "Conceptos", "Árbol", "Mensajes", "Agenda", "Fechas", "Presupuesto"].map((t) => (
          <Tab key={t} href="#">{t}</Tab>
        ))}
        <Tab href="#" $active>Diagrama de barras<Icon name="close" size={14} /></Tab>
        <TabMenu type="button" aria-label="Lista de ventanas">
          <Svg viewBox="0 0 9 9" $s={9}><path d="M1 3h7L4.500 7z" fill="#222" /></Svg>
        </TabMenu>
      </TabBar>
      <ChartBar>
        <ChartTools $first><Tool name="addRow" w={27} h={26} size={20} /></ChartTools>
        <ChartTools $open>{["rowL", "rowR", "rowD", "rowU"].map((n) => <Tool key={n} name={n} w={27} h={26} />)}</ChartTools>
        <Fields $tight>
          <Select label="Esquema" value="Resúmenes" width={89} />
          <Select label="Vista" value="[Plan] Fechas y holguras" width={156} />
        </Fields>
        <Fields>
          <Select label="Texto" value="Resumen" width={65} />
          <Select label="Valor" value="CanReal" width={112} />
        </Fields>
        <ChartTools>
          <Tool name="scaleM" w={27} h={26} size={20} />
          {["link1", "link2", "grid3"].map((n) => <Tool key={n} name={n} on w={27} h={26} />)}
        </ChartTools>
        <Fields><Select label="Nivel" value="2" width={49} /></Fields>
        <ChartTools>
          <Tool name="orange" on w={27} h={26} size={20} />
          {["brown", "blueBars", "greenBars"].map((n) => <Tool key={n} name={n} w={27} h={26} size={20} />)}
          <Tool name="flow" on w={27} h={26} />
          <Tool name="diamond" w={27} h={26} />
        </ChartTools>
        <ChartTools><Tool name="window" w={27} h={26} /></ChartTools>
        <Fields><Select label="Día" value="Día de control" width={87} /></Fields>
        <ChartTools $open><Tool name="closeAll" w={27} h={26} /></ChartTools>
      </ChartBar>
      <Work>
        <TablePane><ConceptTable /></TablePane>
        <Splitter />
        <GanttPane>
          <ChartFrame>
            <Scale>
              <Period style={{ width: ORIGIN_X - 1 }} />
              <Period>2026</Period>
            </Scale>
            <Scale $last>
              {MONTHS.map((m, i) => (
                <Period key={m.key} style={{ width: m.w, marginLeft: i ? 0 : m.x - 1 }}>{m.text}</Period>
              ))}
            </Scale>
            <Gantt />
          </ChartFrame>
          <HScroll><HThumb /></HScroll>
        </GanttPane>
        <VScroll><VThumb /></VScroll>
      </Work>
      <Footer>
        <FooterTab type="button">Antecesores</FooterTab>
        <FooterTab type="button">Sucesores</FooterTab>
      </Footer>
    </Shell>
  );
}
